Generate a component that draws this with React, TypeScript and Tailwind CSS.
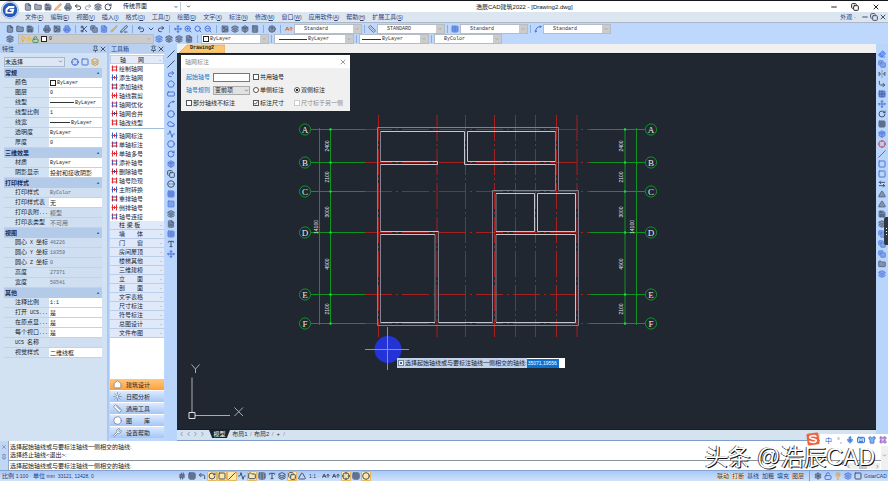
import React from "react";
import {
  Activity, AArrowUp, ArrowLeftRight, Box, Brush, Calculator, ChevronDown, ChevronLeft, ChevronRight, Circle, CircleEllipsis,
  Cloud, Copy, CornerDownRight, Crosshair, Eraser, File, FileText, FlipHorizontal2, Folder, Grid2x2, Grid3x3, Image,
  Layers, Lightbulb, Minus, Move, Pentagon, PenLine, Pin, Printer, Redo2, RectangleHorizontal, RotateCw,
  Save, Scissors, Search, Settings, Shirt, Slash, Spline, Square, Table, Triangle, Type, Undo2, LockOpen, X, ZoomIn,
  ZoomOut, CircleHelp, Keyboard, Mic, LayoutGrid, House, Sun, Ruler, Compass, Wrench, Hash, CornerUpLeft,
} from "lucide-react";

type Icon = React.ComponentType<{ className?: string; strokeWidth?: number }>;

const MONO = "font-['Liberation_Mono','Noto_Sans_CJK_SC',monospace]";
const DARK = "text-[#44526c]";
const BLUE = "text-[#4a72d8]";

function IconButton({ icon: I, label, tone = DARK, box = "w-[10px]", solid = false }: {
  icon: Icon; label: string; tone?: string; box?: string; solid?: boolean;
}) {
  return (
    <button type="button" aria-label={label} className={`flex h-[10px] shrink-0 items-center justify-center ${box} ${tone}`}>
      <I className={solid ? "size-[8px] fill-current [fill-opacity:0.5]" : "size-[8px]"} strokeWidth={solid ? 2 : 3} />
    </button>
  );
}

function Sep({ tight = false }: { tight?: boolean }) {
  return <span className={`h-[8px] w-px shrink-0 bg-[#8facd6] ${tight ? "mx-[2px]" : "mx-[3px]"}`} />;
}

function Combo({ label, value, width, lead, bg = "bg-white", pad = "pl-[9px]" }: {
  label: string; value: string; width: string; lead?: React.ReactNode; bg?: string; pad?: string;
}) {
  return (
    <label className={`flex h-[10px] shrink-0 items-center border border-[#b4bcc8] ${bg} ${pad} ${width}`}>
      {lead}
      <select aria-label={label} className={`h-[8px] min-w-0 flex-1 appearance-none bg-transparent text-[5px] leading-[8px] text-[#333] ${MONO}`}>
        <option>{value}</option>
      </select>
      <span className="flex h-full w-[8px] items-center justify-center bg-[#cbcbcb]">
        <ChevronDown className="size-[4px] text-[#888]" strokeWidth={3} />
      </span>
    </label>
  );
}

const lineSample = <span className="mr-px h-px w-[24px] shrink-0 bg-[#333]" />;

/* ---------- top bars ---------- */

function Logo() {
  return (
    <svg viewBox="0 0 36 36" className="absolute left-[1px] top-[1px] z-10 size-[18px]">
      <circle cx="18" cy="18" r="17" fill="#dfe9f7" stroke="#8ba6cf" strokeWidth="1.5" />
      <circle cx="18" cy="18" r="14.5" fill="#2458b8" />
      <path d="M27 10H15L9 16v9h15l3-9H18l-1 3.500h4.500l-.7 2.500H13v-4l4-3.500h9z" fill="#fff" />
    </svg>
  );
}

function TitleBar() {
  const quick: [Icon, string, string][] = [
    [File, "新建", DARK], [Folder, "打开", DARK], [Save, "保存", DARK], [PenLine, "另存为", "text-[#d8842c]"],
    [Printer, "打印", DARK], [Undo2, "放弃", DARK], [Redo2, "重做", "text-[#98a0ae]"], [Layers, "图层", DARK], [RotateCw, "刷新", DARK],
  ];
  return (
    <header className="relative flex h-[12px] items-center border-t border-[#15151c] bg-white">
      <div className="flex flex-[47] items-center pl-[23px]">
        {quick.map(([i, l, t]) => <IconButton key={l} icon={i} label={l} tone={t} solid={![Undo2, Redo2, RotateCw].includes(i as typeof Undo2)} />)}
        <label className="ml-[10px] flex h-[9px] w-[58px] items-center border-r border-[#c3cddb]">
          <select aria-label="界面" className="h-[9px] min-w-0 flex-1 appearance-none bg-transparent text-[6px] leading-[9px] text-[#111]">
            <option>传统界面</option>
          </select>
          <ChevronDown className="mr-[2px] size-[4px]" strokeWidth={4} />
        </label>
        <ChevronDown className="ml-[5px] size-[5px] text-[#39465e]" strokeWidth={4} />
      </div>
      <h1 className="text-[6px] leading-none text-[#111]">浩辰CAD建筑2022 - [Drawing2.dwg]</h1>
      <div className="flex flex-[32] items-center justify-end gap-[11px] pr-[7px]">
        <IconButton icon={Minus} label="最小化" tone="text-[#222]" />
        <IconButton icon={Copy} label="还原" tone="text-[#222]" />
        <IconButton icon={X} label="关闭" tone="text-[#222]" />
      </div>
    </header>
  );
}

function MenuBar() {
  const menus = [
    ["文件", "F"], ["编辑", "E"], ["视图", "V"], ["插入", "I"], ["格式", "O"], ["工具", "T"], ["绘图", "D"], ["文字", "X"],
    ["标注", "N"], ["修改", "M"], ["窗口", "W"], ["应用软件", "A"], ["帮助", "H"], ["扩展工具", "S"],
  ];
  return (
    <nav className="flex h-[10px] items-center bg-[#dbe6f1] pl-[25px] text-[6px] leading-none text-[#26407c]">
      <div className="flex flex-1 gap-[7px]">
        {menus.map(([m, k]) => (
          <button key={m} type="button" className="whitespace-nowrap">
            {m}<span className="text-[5px]">(<u>{k}</u>)</span>
          </button>
        ))}
      </div>
      <button type="button" className="mr-[4px]">外观 ·</button>
      <div className="flex pr-[1px]">
        <IconButton icon={Minus} label="最小化图纸" box="w-[9px]" />
        <IconButton icon={Copy} label="还原图纸" box="w-[9px]" />
        <IconButton icon={X} label="关闭图纸" box="w-[9px]" />
      </div>
    </nav>
  );
}

function Toolbars() {
  const groups: [Icon, string, string, boolean?][][] = [
    [[File, "新建图纸", DARK, true], [Folder, "打开图纸", DARK, true], [Save, "保存图纸", DARK, true]],
    [[Printer, "打印图纸", DARK, true], [Image, "预览", DARK, true], [Printer, "发布", BLUE, true]],
    [[Scissors, "剪切", DARK], [Copy, "复制", DARK, true], [FileText, "粘贴", BLUE, true], [Brush, "格式刷", "text-[#e0a034]", true], [PenLine, "块编辑", DARK]],
    [[Undo2, "撤销", DARK], [ChevronDown, "撤销列表", DARK], [Redo2, "恢复", DARK]],
    [[Move, "平移", BLUE], [ZoomIn, "放大", BLUE], [Search, "窗口缩放", BLUE], [ZoomOut, "缩小", BLUE]],
    [[Image, "特性", DARK, true], [Layers, "设计中心", DARK, true], [Box, "工具选项板", DARK, true], [Calculator, "计算器", DARK, true]],
    [[CircleHelp, "帮助", DARK, true]],
  ];
  return (
    <div className="border-t border-[#a9b7c8] bg-[#bdd8fc]">
      <div className="flex h-[11px] items-center overflow-hidden pl-[5px]">
        {groups.map((g, n) => (
          <React.Fragment key={n}>
            {g.map(([i, l, t, s]) => <IconButton key={l} icon={i} label={l} tone={t} solid={s} />)}
            <Sep />
          </React.Fragment>
        ))}
        <IconButton icon={AArrowUp} label="文字样式图标" tone="text-[#e0702c]" />
        <Combo label="文字样式" value="Standard" width="w-[68px]" />
        <Sep tight />
        <IconButton icon={Ruler} label="标注样式图标" tone="text-[#c8543c]" />
        <Combo label="标注样式" value="STANDARD" width="w-[68px]" />
        <Sep tight />
        <IconButton icon={Table} label="表格样式图标" tone={BLUE} solid />
        <Combo label="表格样式" value="Standard" width="w-[68px]" />
        <Sep tight />
        <IconButton icon={Spline} label="引线样式图标" tone={BLUE} />
        <Combo label="引线样式" value="Standard" width="w-[68px]" />
      </div>
      <div className="flex h-[10px] items-center overflow-hidden pl-[5px]">
        <IconButton icon={Layers} label="图层管理器" solid />
        <Combo
          label="当前图层" value="0" width="ml-[3px] w-[136px]" bg="bg-[#cbcbcb]" pad="pl-[1px]"
          lead={<>
            <Lightbulb className="size-[6px] text-[#efb13a]" strokeWidth={4} />
            <Sun className="size-[6px] text-[#efc13a]" strokeWidth={4} />
            <LockOpen className="size-[7px] text-[#2f8f46]" strokeWidth={3} />
            <span className="ml-[2px] mr-[2px] size-[6px] border border-[#222] bg-white" />
          </>}
        />
        <IconButton icon={Layers} label="图层匹配" tone={BLUE} solid />
        <IconButton icon={Layers} label="上一图层" solid />
        <IconButton icon={Layers} label="图层状态" solid />
        <IconButton icon={FileText} label="图层转换" solid />
        <Sep />
        <Combo label="颜色" value="ByLayer" width="w-[68px]" pad="pl-[1px]" lead={<span className="mr-px size-[6px] border border-[#222] bg-white" />} />
        <Sep tight />
        <Combo label="线型" value="ByLayer" width="w-[80px]" pad="pl-[4px]" lead={<span className="mr-px h-px w-[28px] bg-[#333]" />} />
        <Sep tight />
        <Combo label="线宽" value="ByLayer" width="w-[70px]" pad="pl-[2px]" lead={<span className="mr-px h-px w-[19px] bg-[#333]" />} />
        <Sep tight />
        <Combo label="打印样式" value="ByColor" width="w-[68px]" />
      </div>
    </div>
  );
}

/* ---------- properties panel ---------- */

type Prop = { label: string; value: string; lead?: React.ReactNode; locked?: boolean };
const propGroups: { title: string; rows: Prop[] }[] = [
  {
    title: "常规",
    rows: [
      { label: "颜色", value: "ByLayer", lead: <span className="mr-px size-[6px] shrink-0 border border-[#222]" /> },
      { label: "图层", value: "0" },
      { label: "线型", value: "ByLayer", lead: lineSample },
      { label: "线型比例", value: "1" },
      { label: "线宽", value: "ByLayer", lead: <span className="mr-px h-px w-[20px] shrink-0 bg-[#333]" /> },
      { label: "透明度", value: "ByLayer" },
      { label: "厚度", value: "0" },
    ],
  },
  { title: "三维效果", rows: [{ label: "材质", value: "ByLayer" }, { label: "阴影显示", value: "投射和接收阴影" }] },
  {
    title: "打印样式",
    rows: [
      { label: "打印样式", value: "ByColor", locked: true },
      { label: "打印样式表", value: "无" },
      { label: "打印表附...", value: "模型", locked: true },
      { label: "打印表类型", value: "不可用", locked: true },
    ],
  },
  {
    title: "视图",
    rows: [
      { label: "圆心 X 坐标", value: "46226", locked: true },
      { label: "圆心 Y 坐标", value: "18359", locked: true },
      { label: "圆心 Z 坐标", value: "0", locked: true },
      { label: "高度", value: "27371", locked: true },
      { label: "宽度", value: "50541", locked: true },
    ],
  },
  {
    title: "其他",
    rows: [
      { label: "注释比例", value: "1:1" },
      { label: "打开 UCS...", value: "是" },
      { label: "在原点显...", value: "是" },
      { label: "每个视口...", value: "是" },
      { label: "UCS 名称", value: "", locked: true },
      { label: "视觉样式", value: "二维线框" },
    ],
  },
];

function PanelTitle({ children }: { children: React.ReactNode }) {
  return (
    <div className="flex h-[9px] shrink-0 items-center bg-[#b9d0ee] pl-[2px] text-[6px] leading-none text-[#26407c]">
      <h2 className="flex-1">{children}</h2>
      <IconButton icon={Pin} label="固定" box="w-[7px]" />
      <IconButton icon={X} label="关闭面板" box="w-[8px]" />
    </div>
  );
}

function Properties() {
  return (
    <aside className="flex w-[107px] shrink-0 flex-col bg-[#d3e2f3] text-[#222]">
      <PanelTitle>特性</PanelTitle>
      <div className="mb-px ml-[4px] mt-[3px] flex h-[11px] items-center">
        <label className="flex h-[10px] w-[61px] items-center border border-[#a9b9cc] bg-[#dce7f3]">
          <select aria-label="选择对象" className="h-[8px] min-w-0 flex-1 appearance-none bg-transparent text-[6px] leading-[8px]">
            <option>未选择</option>
          </select>
          <ChevronDown className="mr-[1px] size-[5px]" />
        </label>
        <div className="ml-[5px] flex">
          <IconButton icon={Crosshair} label="快速选择" tone={BLUE} />
          <IconButton icon={Square} label="选择窗口" tone={BLUE} />
          <IconButton icon={Layers} label="切换选择" tone="text-[#d59a35]" />
        </div>
      </div>
      <div className="ml-[4px] mr-[5px]">
        {propGroups.map((g) => (
          <section key={g.title}>
            <h3 className="flex h-[10px] items-center justify-between bg-[#b3cbe8] pl-[1px] pr-[2px] text-[6px] font-bold leading-none text-[#1b2c50]">
              {g.title}
              <span className="text-[4px] text-[#2e5fc0]">▲</span>
            </h3>
            {g.rows.map((r) => (
              <label key={r.label} className="flex h-[10px] items-center border-b border-[#c2d3e6] pl-[11px] text-[6px] leading-none">
                <span className={`w-[34px] shrink-0 whitespace-nowrap ${MONO}`}>
                  {r.label.split(/([A-Z. ]+)/).map((t, n) => <span key={n} className={n % 2 ? "text-[5px]" : ""}>{t}</span>)}
                </span>
                <span className={`flex h-full min-w-0 flex-1 items-center pl-[1px] ${r.locked ? "bg-[#cfdff1] text-[#5d6876]" : "bg-white"}`}>
                  {r.lead}
                  <input
                    readOnly={r.locked}
                    defaultValue={r.value}
                    className={`h-full w-full min-w-0 bg-transparent leading-none ${MONO} ${/^[\x20-\x7e]*$/.test(r.value) ? "text-[5px]" : "text-[6px]"}`}
                  />
                </span>
              </label>
            ))}
          </section>
        ))}
      </div>
    </aside>
  );
}

/* ---------- toolbox ---------- */

const axisTools = [["绘制轴网", "添生轴网", "添加轴线", "轴线裁剪", "轴网优化", "轴网合并", "轴改线型"],
  ["轴网标注", "单轴标注", "单轴多号", "添补轴号", "删除轴号", "轴号隐现", "主附转换", "重排轴号", "倒排轴号", "轴号连接"]];
const drawers = ["柱 梁 板", "墙　　体", "门　　窗", "房间屋顶", "楼梯其他", "三维建模", "立　　面", "剖　　面", "文字表格", "尺寸标注", "符号标注", "总图设计", "文件布图"];
const modules: [Icon, string][] = [[House, "建筑设计"], [Sun, "日照分析"], [Ruler, "通用工具"], [Compass, "图　　库"], [Wrench, "设置帮助"]];

function AxisGlyph({ n }: { n: number }) {
  return (
    <svg viewBox="0 0 14 14" className="size-[7px] shrink-0" fill="none" strokeWidth="2">
      <path d="M3 1v12M11 1v12" stroke={n % 3 === 1 ? "#2e5fc8" : "#dc2f38"} />
      <path d={n % 2 ? "M1 7h12M7 4v6" : "M1 4h12M1 10h12"} stroke={n % 3 === 2 ? "#2e4b98" : "#dc2f38"} />
    </svg>
  );
}

function Toolbox() {
  return (
    <aside className="flex w-[58px] shrink-0 flex-col border-l-2 border-[#a9c8f5] bg-[#bfd7fa] text-[#1d2430]">
      <PanelTitle>工具箱</PanelTitle>
      <div className="mx-[1px] mb-[3px] mt-[1px] flex min-h-0 flex-1 flex-col bg-white">
        <button type="button" className="mt-[1px] flex h-[9px] shrink-0 items-center justify-between border border-[#c0cfe4] bg-[#e3ebf8] pl-[9px] pr-[2px] text-[6px] leading-none">
          轴　　网<span>·</span>
        </button>
        {axisTools.map((list, k) => (
          <ul key={k} className={k ? "pt-[2px]" : "border-b border-[#9fc0dc] pb-[1px]"}>
            {list.map((t, n) => (
              <li key={t} className="h-[9px]">
                <button type="button" className="flex h-full items-center gap-[1px] pl-[1px] text-[6px] leading-none">
                  <AxisGlyph n={n + k} />{t}
                </button>
              </li>
            ))}
          </ul>
        ))}
        <div>
          {drawers.map((d) => (
            <button key={d} type="button" className="flex h-[9px] w-full items-center justify-between border-b border-[#bccdea] bg-[#e0e9fa] pl-[9px] pr-[2px] text-[6px] leading-none">
              {d}<span>·</span>
            </button>
          ))}
        </div>
        <div className="mt-auto flex flex-col gap-px">
          {modules.map(([I, m], n) => (
            <button
              key={m} type="button"
              className={`flex h-[11px] items-center gap-[4px] pl-[3px] text-[6px] leading-none ${n ? "bg-linear-to-b from-[#dceafe] to-[#a5c6f5]" : "bg-linear-to-b from-[#ffc779] to-[#fda13a]"}`}
            >
              <I className="size-[9px] fill-white text-[#6b7890]" strokeWidth={2} />{m}
            </button>
          ))}
        </div>
      </div>
    </aside>
  );
}

function SideTools({ tools, width }: { tools: [Icon, string, string, boolean?][]; width: string }) {
  return (
    <div className={`flex shrink-0 flex-col items-center bg-[#bad5fb] pt-[5px] ${width}`}>
      {tools.map(([i, l, t, s]) => <IconButton key={l} icon={i} label={l} tone={t} solid={s} />)}
    </div>
  );
}

const drawTools: [Icon, string, string, boolean?][] = [
  [Slash, "直线", DARK], [Slash, "构造线", DARK], [Redo2, "多段线", BLUE], [Pentagon, "多边形", BLUE],
  [RectangleHorizontal, "矩形", BLUE], [Spline, "圆弧", BLUE], [Circle, "圆", BLUE], [Cloud, "修订云线", BLUE],
  [Activity, "样条曲线", BLUE], [Circle, "椭圆", BLUE], [RotateCw, "椭圆弧", BLUE], [Box, "插入块", BLUE, true],
  [Copy, "创建块", DARK], [CircleEllipsis, "点", DARK], [Grid3x3, "图案填充", BLUE, true], [Square, "渐变色", BLUE, true],
  [Layers, "面域", DARK, true], [FileText, "边界", DARK, true], [Table, "表格", BLUE, true], [Type, "多行文字", DARK], [Move, "测量", BLUE],
];
const editTools: [Icon, string, string, boolean?][] = [
  [Eraser, "删除", "text-[#3566e6]", true], [Copy, "复制对象", BLUE, true], [FlipHorizontal2, "镜像", DARK, true], [CornerDownRight, "偏移", DARK],
  [Grid2x2, "阵列", "text-[#2d4ea0]", true], [Move, "移动", BLUE], [RotateCw, "旋转", DARK], [Grid3x3, "缩放", DARK, true], [Box, "拉伸", BLUE, true],
  [Crosshair, "修剪", "text-[#bf5060]"], [Slash, "延伸", "text-[#bf5060]"], [Square, "打断于点", BLUE], [Square, "打断", BLUE],
  [ArrowLeftRight, "合并", DARK], [Triangle, "倒角", DARK, true], [Triangle, "圆角", DARK, true], [Save, "分解", DARK, true], [Layers, "前置", DARK, true],
  [Copy, "后置", BLUE, true], [Copy, "置于上方", BLUE, true], [Copy, "置于下方", BLUE, true], [Folder, "编组", DARK, true], [Layers, "取消编组", BLUE, true],
];

/* ---------- drawing ---------- */

const rowsY: [string, number][] = [["A", 129.5], ["B", 162.5], ["C", 191.5], ["D", 232.5], ["E", 294.5], ["F", 323.5]];
const axisX = [378.5, 437, 465.5, 494.5, 515.5, 535.5, 556.5, 577];
const spans: [string, number][] = [["2400", 146], ["2100", 177], ["3000", 212], ["4500", 264], ["2100", 309]];

function FloorPlan() {
  return (
    <svg className="absolute inset-0 h-full w-full" fill="none">
      <g transform="translate(-177 -54)">
        <g stroke="#a3211f" strokeWidth="1">
          {rowsY.map(([k, y]) => <path key={k} d={`M365 ${y}H590`} strokeDasharray="27 4 2 4" />)}
          {axisX.map((x) => <path key={x} d={`M${x} 115V337`} strokeDasharray="26 3 2 3" />)}
        </g>
        <g stroke="#0f9424" strokeWidth="1">
          {rowsY.map(([k, y]) => (
            <g key={k}>
              <path d={`M311 ${y}H365M590 ${y}H645`} />
              <circle cx="305" cy={y} r="5.600" />
              <circle cx="651" cy={y} r="5.600" />
            </g>
          ))}
          <path d="M319.500 128V325M330.500 128V325M625 128V325M636.500 128V325" />
        </g>
        <g fill="#22d43c">
          {rowsY.map(([k, y]) => [330.5, 625].map((x) => <circle key={k + x} cx={x} cy={y} r="1.200" />))}
        </g>
        <g stroke="#7d8390" strokeWidth="1">
          <path d="M377.500 127.500H558.500V190.500H578.500V325.500H377.500Z" />
          <path d="M492.500 322.500V190.500H555.500V164.500M438.500 322.500V231.500M555.500 131.500V161.500M435 234.500V322M496 193.500V231.500M496 234.500V322M380.500 131.500V161.500M380.500 164.500V231.500M380.500 234.500V322" />
        </g>
        <g stroke="#c3c6cc" strokeWidth="1">
          <path d="M380.500 131.500H464.500V164.500H555.500M467.500 161.500V131.500H555.500M467.500 161.500H555.500" />
          <path d="M380.500 161.500H437.500V164.500H380.500M380.500 231.500H438.500M380.500 234.500H435M380.500 322.500H435M438.500 322.500H492.500" />
          <path d="M496 193.500H534.500V231.500H496M537.500 231.500V193.500H575.500V231.500H537.500M496 234.500H575.500V322.500H496" />
        </g>
        <g fill="#e8eaed" textAnchor="middle" className="font-['Liberation_Serif',serif] text-[9px]">
          {rowsY.map(([k, y]) => (
            <g key={k}>
              <text x="305" y={y + 3}>{k}</text>
              <text x="651" y={y + 3}>{k}</text>
            </g>
          ))}
        </g>
        <g fill="#e3e5e8" textAnchor="middle" className="font-['Liberation_Sans',sans-serif] text-[5px]">
          {spans.map(([t, y], n) => [329, 623].map((x) => <text key={x + "-" + n} transform={`translate(${x} ${y}) rotate(-90)`}>{t}</text>))}
          <text transform="translate(318 227) rotate(-90)">14100</text>
          <text transform="translate(634 227) rotate(-90)">14100</text>
        </g>
        <circle cx="388" cy="349.500" r="13.500" fill="#2433d6" />
        <path d="M365 349.500H409M387.500 327V370" stroke="#8f958f" />
        <g stroke="#a9adb3">
          <path d="M192 412V377.500M195 415.500H230" />
          <path d="M189 412.500h6v6h-6z" stroke="#dfe1e4" />
          <path d="M191.500 364.500l4 4.500 4-4.500M195.500 369v4M234.500 407.500l8.500 8.500M243 407.500l-8.500 8.500" />
        </g>
      </g>
    </svg>
  );
}

function AxisDialog() {
  const box = "size-[6px] shrink-0 appearance-none border border-[#555] bg-white";
  return (
    <form className="absolute left-[4px] top-px flex h-[56px] w-[169px] flex-col bg-[#f0f0f0] text-[6px] leading-none text-[#222]">
      <div className="flex h-[13px] items-center justify-between bg-white pl-[4px] pr-[2px] text-[#8b8b8b]">
        <h2>轴网标注</h2>
        <IconButton icon={X} label="关闭对话框" tone="text-[#999]" />
      </div>
      <div className="grid flex-1 grid-cols-[66px_41px_1fr] content-start gap-y-[3px] px-[5px] pt-[4px]">
        <label className="flex h-[10px] items-center gap-[3px] text-[#2076c8]">
          起始轴号<input className="h-[9px] w-[37px] border border-[#777] bg-white" />
        </label>
        <label className="col-span-2 flex items-center gap-[1px] pl-[1px]"><input type="checkbox" className={box} />共用轴号</label>
        <label className="flex h-[10px] items-center gap-[3px] text-[#2076c8]">
          轴号规则
          <span className="flex h-[9px] w-[37px] items-center border border-[#aaa] bg-[#e1e1e1] text-[#222]">
            <select className="h-[7px] min-w-0 flex-1 appearance-none bg-transparent pl-px leading-[7px]"><option>变前项</option></select>
            <ChevronDown className="size-[5px]" />
          </span>
        </label>
        <label className="flex items-center gap-[1px] pl-[1px]"><input type="radio" name="side" className={`${box} rounded-full`} />单侧标注</label>
        <label className="flex items-center gap-[1px] pl-[1px]">
          <input type="radio" name="side" defaultChecked className={`${box} rounded-full checked:bg-[radial-gradient(#222_40%,#fff_50%)]`} />双侧标注
        </label>
        <label className="flex h-[10px] items-center gap-[1px]"><input type="checkbox" className={box} />部分轴线不标注</label>
        <label className="relative flex items-center gap-[1px] pl-[1px]">
          <input type="checkbox" defaultChecked className={box} />
          <svg viewBox="0 0 6 6" className="absolute left-[1px] size-[6px]"><path d="M1.500 3l1 1.200L4.600 1.600" fill="none" stroke="#222" strokeWidth="0.800" /></svg>
          标注尺寸
        </label>
        <label className="flex items-center gap-[1px] whitespace-nowrap pl-[1px] text-[#8a8a8a]">
          <input type="checkbox" disabled className="size-[6px] shrink-0 appearance-none border border-[#ccc] bg-white" />尺寸标于另一侧
        </label>
      </div>
    </form>
  );
}

function Workspace() {
  return (
    <main className="flex min-w-0 flex-1 flex-col bg-[#d5e2f0]">
      <div className="flex h-[9px] shrink-0 bg-[#f0f0f0] pl-[2px]">
        <button type="button" className="relative h-full w-[46px]">
          <svg viewBox="0 0 46 9" className="absolute inset-0 h-full w-full"><path d="M0 9L8 1H46V9Z" fill="#fbc66e" stroke="#c9a56a" strokeWidth="0.600" /></svg>
          <span className={`relative block text-[5px] font-bold leading-[9px] text-[#222] ${MONO}`}>Drawing2</span>
        </button>
      </div>
      <div className="relative min-h-0 flex-1 overflow-hidden border-b border-t border-[#171b24] bg-[#202731]">
        <FloorPlan />
        <AxisDialog />
        <label className="absolute left-[220px] top-[304px] flex h-[10px] items-center bg-[#c2d3ea] pl-[1px] text-[6px] leading-none text-[#1b2230]">
          <span className="mr-px flex size-[6px] items-center justify-center border border-[#7084a5] bg-[#eef3fa]"><span className="size-[2px] bg-[#4c628c]" /></span>
          <span className="whitespace-nowrap">选择起始轴线或与要标注轴线一侧相交的轴线:</span>
          <span className="flex h-full w-[38px] items-center bg-white">
            <input defaultValue="35071,19556" className="h-[9px] w-[32px] bg-[#0a72d4] pl-px text-[5px] leading-none text-white" />
          </span>
        </label>
      </div>
      <div className="flex h-[8px] shrink-0 items-center text-[6px] leading-none text-[#27324a]">
        <div className="mr-[3px] flex pl-[1px]">
          <IconButton icon={ChevronLeft} label="首个布局" box="w-[7px]" tone="text-[#7f93b4]" />
          <IconButton icon={ChevronLeft} label="上一布局" box="w-[7px]" tone="text-[#7f93b4]" />
          <IconButton icon={ChevronRight} label="下一布局" box="w-[7px]" tone="text-[#7f93b4]" />
          <IconButton icon={ChevronRight} label="末个布局" box="w-[7px]" tone="text-[#7f93b4]" />
        </div>
        <button type="button" className="h-[8px] w-[21px] bg-[#1c222e] text-white [clip-path:polygon(0_0,100%_0,85%_100%,15%_100%)]">模型</button>
        <button type="button" className="w-[20px]">布局1</button>
        <span className="text-[#8292aa]">/</span>
        <button type="button" className="w-[20px]">布局2</button>
        <span className="text-[#8292aa]">/</span><button type="button" className="w-[10px]">+</button><span className="text-[#8292aa]">/</span>
      </div>
      <div className="h-[3px] shrink-0 border-b border-[#7f9dcb]" />
    </main>
  );
}

/* ---------- bottom ---------- */

function CommandLine() {
  return (
    <section className="relative flex h-[29px] shrink-0 bg-white text-[6px] leading-none text-[#222]">
      <div className="flex w-[9px] flex-col items-center border-r border-[#8fa6c4] bg-[#bfd6f5] pt-px">
        <IconButton icon={X} label="关闭命令行" box="w-[6px]" tone="text-[#6f86ad]" />
        <IconButton icon={Pin} label="固定命令行" box="w-[6px]" tone="text-[#6f86ad]" />
      </div>
      <div className="flex flex-1 flex-col">
        <div className="flex h-[20px] flex-col justify-center gap-[2px] border-b border-[#8a93a0] pl-px">
          <p>选择起始轴线或与要标注轴线一侧相交的轴线:</p>
          <p>选择终止轴线&lt;退出&gt;:</p>
        </div>
        <label className="flex flex-1 items-center pl-px">
          选择起始轴线或与要标注轴线一侧相交的轴线:
          <input aria-label="命令" className="h-full min-w-0 flex-1 bg-transparent" />
        </label>
      </div>
      <div className="flex w-[7px] items-center justify-center bg-[#f0f0f0]"><ChevronDown className="size-[5px] text-[#444]" /></div>
      <div className="absolute bottom-px right-[8px] flex h-[6px] w-[34px] items-center justify-between bg-[#f0f0f0]">
        <ChevronLeft className="size-[5px]" /><span className="h-full w-[8px] bg-[#c6c6c6]" /><ChevronRight className="size-[5px]" />
      </div>
      <div className="absolute right-0 top-[-7px] flex h-[12px] w-[68px] items-center justify-end gap-[1px] bg-white text-[#1b66d6]">
        <span className="w-[9px] text-[7px]">中</span><span className="w-[9px] pl-[2px] text-[7px]">°,</span>
        <IconButton icon={Mic} label="语音" tone="text-[#1b66d6]" solid />
        <IconButton icon={Keyboard} label="键盘" tone="text-[#1b66d6]" />
        <IconButton icon={Shirt} label="皮肤" tone="text-[#1b66d6]" solid />
        <IconButton icon={LayoutGrid} label="工具" tone="text-[#8d54c4]" solid />
      </div>
      <svg viewBox="0 0 28 28" className="absolute right-[68px] top-[-9px] size-[14px]">
        <rect x="2" y="2" width="24" height="24" rx="3" fill="#f1613b" transform="rotate(-8 14 14)" />
        <path d="M21 9.500C17 6 7 7 7.500 11c.5 3.500 13 2 13 6 0 4.500-10 5-14 1" fill="none" stroke="#fff" strokeWidth="3.200" />
      </svg>
      <p className="pointer-events-none absolute right-[13px] top-[3px] whitespace-nowrap text-[23px] leading-[26px] text-white [text-shadow:1px_1px_0_#111,-1px_0_0_#555]">
        头条 @浩辰CAD
      </p>
    </section>
  );
}

function StatusBar() {
  const toggles: [Icon, string, boolean][] = [
    [Hash, "捕捉", false], [Grid3x3, "栅格", false], [CornerUpLeft, "正交", false], [RotateCw, "极轴", true], [Square, "对象捕捉", true],
    [Slash, "追踪", true], [Activity, "动态输入", false], [Folder, "选择循环", true], [Table, "线宽显示", false], [Type, "注释监视", false],
    [Layers, "图层显示", false], [Copy, "三维捕捉", true], [Triangle, "注释比例", false],
  ];
  const tail: [Icon, string, boolean][] = [[AArrowUp, "注释可见", false], [AArrowUp, "自动缩放", false], [Crosshair, "全屏", true], [Grid3x3, "网格", false], [Circle, "硬件加速", true]];
  const hot = "rounded-[1px] bg-[#ffe7a8] ring-1 ring-inset ring-[#e4b85c]";
  const render = ([i, l, on]: [Icon, string, boolean]) => (
    <span key={l} className={on ? hot : ""}><IconButton icon={i} label={l} /></span>
  );
  return (
    <footer className="flex h-[11px] shrink-0 items-center border-t border-[#86a3cf] bg-linear-to-b from-[#a9c9f6] to-[#d0e2fa] text-[6px] leading-none text-[#1f3c78]">
      <p className="w-[177px] whitespace-nowrap pl-[2px]">比例 <span className="text-[5px]">1:100 ·</span> 单位 <span className="text-[5px]">mm &nbsp;33121, 12428, 0</span></p>
      <div className="flex items-center">{toggles.map(render)}</div>
      <span className="mx-[2px] text-[5px]">1:1 ·</span>
      <div className="flex items-center">{tail.map(render)}</div>
      <div className="ml-auto flex items-center gap-[3px]">
        {["联动", "打断", "基线", "加粗", "填充", "图层"].map((t) => (
          <button key={t} type="button" className={["联动", "打断", "图层"].includes(t) ? "bg-[#ffe09a]" : ""}>{t}</button>
        ))}
      </div>
      <div className="ml-[5px] flex items-center border-l border-[#7f9fd0] pl-[3px]">
        <IconButton icon={Settings} label="设置" solid />
        <IconButton icon={LockOpen} label="锁定" tone={BLUE} />
        <IconButton icon={Lightbulb} label="提示" tone="text-[#e59a2c]" solid />
        <IconButton icon={Layers} label="隔离" tone={BLUE} solid />
        <IconButton icon={Square} label="清屏" />
        <span className="ml-px w-[24px] text-[5px]">GstarCAD</span>
      </div>
    </footer>
  );
}

export default function App() {
  return (
    <div className="relative flex h-screen flex-col overflow-hidden bg-[#bdd8fc] font-['Liberation_Sans','Noto_Sans_CJK_SC',sans-serif]">
      <TitleBar />
      <Logo />
      <MenuBar />
      <Toolbars />
      <div className="flex min-h-0 flex-1">
        <Properties />
        <Toolbox />
        <SideTools tools={drawTools} width="w-[12px]" />
        <Workspace />
        <div className="relative flex">
          <SideTools tools={editTools} width="w-[12px]" />
          <div className="absolute right-0 top-[173px] flex h-[28px] w-[4px] flex-col items-center justify-center gap-[2px] rounded-l-[2px] bg-[#2e3947]">
            <span className="size-px bg-white" /><span className="size-px bg-white" /><span className="size-px bg-white" />
          </div>
        </div>
      </div>
      <CommandLine />
      <StatusBar />
    </div>
  );
}
